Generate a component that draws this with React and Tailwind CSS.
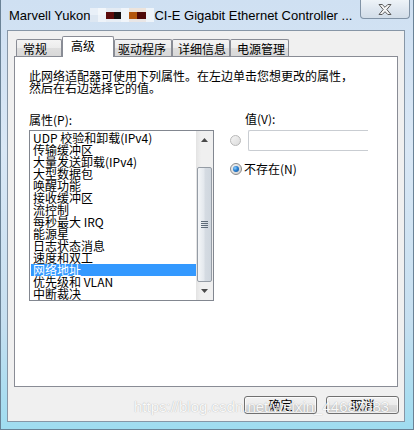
import React from "react";

const items = [
  "UDP 校验和卸载(IPv4)",
  "传输缓冲区",
  "大量发送卸载(IPv4)",
  "大型数据包",
  "唤醒功能",
  "接收缓冲区",
  "流控制",
  "每秒最大 IRQ",
  "能源星",
  "日志状态消息",
  "速度和双工",
  "网络地址",
  "优先级和 VLAN",
  "中断裁决",
];

function Mosaic() {
  return (
    <svg width="64" height="20" viewBox="0 0 64 20" className="shrink-0">
      <rect x="0" y="3" width="8" height="7" fill="#e9f0f8" />
      <rect x="8" y="3" width="8" height="7" fill="#f3f7fb" />
      <rect x="0" y="10" width="8" height="7" fill="#dde7f2" />
      <rect x="8" y="10" width="8" height="7" fill="#eef3f9" />
      <rect x="16" y="3" width="15" height="4" fill="#e4ebf3" />
      <rect x="16" y="7" width="8" height="7" fill="#5c0c0c" />
      <rect x="24" y="7" width="7" height="7" fill="#151010" />
      <rect x="16" y="14" width="15" height="3" fill="#e8eef5" />
      <rect x="31" y="3" width="8" height="14" fill="#f1f5fa" />
      <rect x="39" y="3" width="17" height="4" fill="#ede4dc" />
      <rect x="39" y="7" width="8" height="7" fill="#b3570f" />
      <rect x="47" y="7" width="9" height="7" fill="#4f0a0a" />
      <rect x="39" y="14" width="17" height="3" fill="#e9e6e6" />
      <rect x="56" y="3" width="8" height="14" fill="#eef4fa" />
    </svg>
  );
}

function Tab({ label, w, pl, selected }) {
  if (selected) {
    return (
      <div
        className={`${w} ${pl} h-[21px] mb-[-1px] relative z-10 bg-white border-l border-t border-r border-[#898c95] rounded-t-[2px] pt-[2px] leading-[14px] text-[12px] text-black whitespace-nowrap`}
      >
        {label}
      </div>
    );
  }
  return (
    <div
      className={`${w} ${pl} h-[17px] bg-[linear-gradient(180deg,#f4f4f4_0%,#ececec_50%,#dedede_51%,#d8d8d8_100%)] border-l border-t border-r border-[#898c95] rounded-t-[2px] pt-[2px] leading-[14px] text-[12px] text-black whitespace-nowrap`}
    >
      {label}
    </div>
  );
}

function ArrowUp() {
  return (
    <svg width="7" height="4" viewBox="0 0 7 4">
      <polygon points="3.5,0 7,4 0,4" fill="#4a4a4a" />
    </svg>
  );
}
function ArrowDown() {
  return (
    <svg width="7" height="4" viewBox="0 0 7 4">
      <polygon points="0,0 7,0 3.5,4" fill="#4a4a4a" />
    </svg>
  );
}

function Button({ children }) {
  return (
    <div className="w-[73px] h-[18px] rounded-[3px] border border-[#707070] bg-[linear-gradient(180deg,#f2f2f2_0%,#ebebeb_50%,#dddddd_51%,#cfcfcf_100%)] flex items-center justify-center text-[12px] leading-[12px] text-black shadow-[inset_0_0_0_1px_rgba(255,255,255,0.7)]">
      {children}
    </div>
  );
}

export default function App() {
  return (
    <div className="w-[414px] h-[430px] overflow-hidden relative flex flex-col border-l border-r border-b border-[#6a8296] bg-[linear-gradient(180deg,#cfe0f2_0%,#d9e7f5_35%,#c6dff0_75%,#9fdcf0_100%)] font-['Noto_Sans_CJK_SC',sans-serif]">
      {/* Title bar */}
      <div className="h-[30px] flex items-center pl-[8px] text-[13px] leading-[15px] text-black font-['Liberation_Sans',sans-serif] whitespace-nowrap">
        <span>Marvell Yukon</span>
        <Mosaic />
        <span>CI-E Gigabit Ethernet Controller ...</span>
      </div>

      {/* Close button */}
      <div className="absolute top-0 right-[3px] w-[50px] h-[19px] rounded-b-[4px] border border-t-0 border-[#8193a6] bg-[linear-gradient(180deg,#eef3f8_0%,#dfe7f0_50%,#d2dde8_100%)] flex items-center justify-center">
        <svg width="14" height="11" viewBox="0 0 14 11">
          <polygon
            points="1,0.5 4.2,0.5 7,3.3 9.8,0.5 13,0.5 8.8,5.5 13,10.5 9.8,10.5 7,7.7 4.2,10.5 1,10.5 5.2,5.5"
            fill="#f6f6f6"
            stroke="#5a5a5a"
            strokeWidth="1"
            strokeLinejoin="round"
          />
        </svg>
      </div>

      {/* Client area */}
      <div className="ml-[6px] w-[398px] h-[392px] bg-[#f0f0f0] border border-[#8796a6] flex flex-col">
        {/* Tabs */}
        <div className="ml-[8px] mt-[5px] h-[20px] flex items-end">
          <Tab label="常规" w="w-[46px]" pl="pl-[6px]" />
          <Tab label="高级" w="w-[52px]" pl="pl-[8px]" selected />
          <Tab label="驱动程序" w="w-[58px]" pl="pl-[3px]" />
          <Tab label="详细信息" w="w-[58px]" pl="pl-[5px]" />
          <Tab label="电源管理" w="w-[59px]" pl="pl-[6px]" />
        </div>

        {/* Panel */}
        <div className="ml-[6px] w-[384px] h-[331px] bg-white border border-[#898c95] pl-[14px] pt-[13px] text-[12px] text-black">
          <div className="leading-[12px] whitespace-nowrap">
            <div>此网络适配器可使用下列属性。在左边单击您想更改的属性，</div>
            <div>然后在右边选择它的值。</div>
          </div>

          <div className="mt-[20px] flex">
            {/* Left column */}
            <div className="w-[185px]">
              <div className="leading-[12px] h-[12px] whitespace-nowrap">属性(P):</div>
              <div className="mt-[4px] w-[185px] h-[171px] border border-[#828790] flex bg-white">
                <div className="flex-1 pt-[1px] pl-[1px] overflow-hidden">
                  {items.map((t, i) => (
                    <div
                      key={t}
                      className={
                        i === 11
                          ? "h-[12px] leading-[12px] pl-[2px] whitespace-nowrap bg-[#3399ff] text-white"
                          : "h-[12px] leading-[12px] pl-[2px] whitespace-nowrap text-black"
                      }
                    >
                      {t}
                    </div>
                  ))}
                </div>
                {/* Scrollbar */}
                <div className="w-[17px] flex flex-col bg-[linear-gradient(90deg,#e3e3e3_0%,#f0f0f0_30%,#f0f0f0_100%)]">
                  <div className="h-[17px] flex items-center justify-center">
                    <ArrowUp />
                  </div>
                  <div className="h-[19px]" />
                  <div className="h-[115px] mx-[1px] rounded-[2px] border border-[#959ca5] bg-[linear-gradient(90deg,#f4f6f8_0%,#e4e8ed_45%,#d5dbe2_55%,#cfd6de_100%)] flex items-center justify-center">
                    <div className="flex flex-col gap-[1px]">
                      <div className="w-[7px] h-[1px] bg-[#5e6b78]" />
                      <div className="w-[7px] h-[1px] bg-[#5e6b78]" />
                      <div className="w-[7px] h-[1px] bg-[#5e6b78]" />
                      <div className="w-[7px] h-[1px] bg-[#5e6b78]" />
                    </div>
                  </div>
                  <div className="h-[17px] flex items-center justify-center">
                    <ArrowDown />
                  </div>
                </div>
              </div>
            </div>

            {/* Right column */}
            <div className="ml-[16px] flex flex-col">
              <div className="pl-[15px] leading-[12px] h-[12px] mt-[-1px] whitespace-nowrap">值(V):</div>
              <div className="mt-[5px] h-[21px] flex items-center">
                <div className="w-[11px] h-[11px] rounded-full border border-[#b8b8b8] bg-[linear-gradient(135deg,#f4f4f4,#dcdcdc)]" />
                <div className="ml-[7px] w-[120px] h-[21px] border-l border-t border-b border-[#c9cdd2] rounded-l-[2px] bg-white" />
              </div>
              <div className="mt-[12px] h-[12px] flex items-center">
                <div className="w-[12px] h-[12px] rounded-full border border-[#8a8a8a] bg-[linear-gradient(135deg,#f2f2f2,#d0d0d0)] flex items-center justify-center">
                  <div className="w-[6px] h-[6px] rounded-full bg-[radial-gradient(circle_at_35%_35%,#8fd0ff_0%,#2a7fd0_45%,#0f4f94_100%)]" />
                </div>
                <div className="ml-[2px] leading-[12px] whitespace-nowrap">不存在(N)</div>
              </div>
            </div>
          </div>
        </div>

        {/* Buttons */}
        <div className="mt-[9px] flex justify-end gap-[9px] pr-[5px]">
          <Button>确定</Button>
          <Button>取消</Button>
        </div>
      </div>

      {/* Watermark */}
      <div className="absolute left-[133px] top-[398px] text-[15px] leading-[17px] whitespace-nowrap font-['Liberation_Sans',sans-serif] text-[#fbfbfb] opacity-90 [text-shadow:0_0_1px_rgba(0,0,0,0.35)]">
        https://blog.csdn.net/weixin_44687883
      </div>
    </div>
  );
}
